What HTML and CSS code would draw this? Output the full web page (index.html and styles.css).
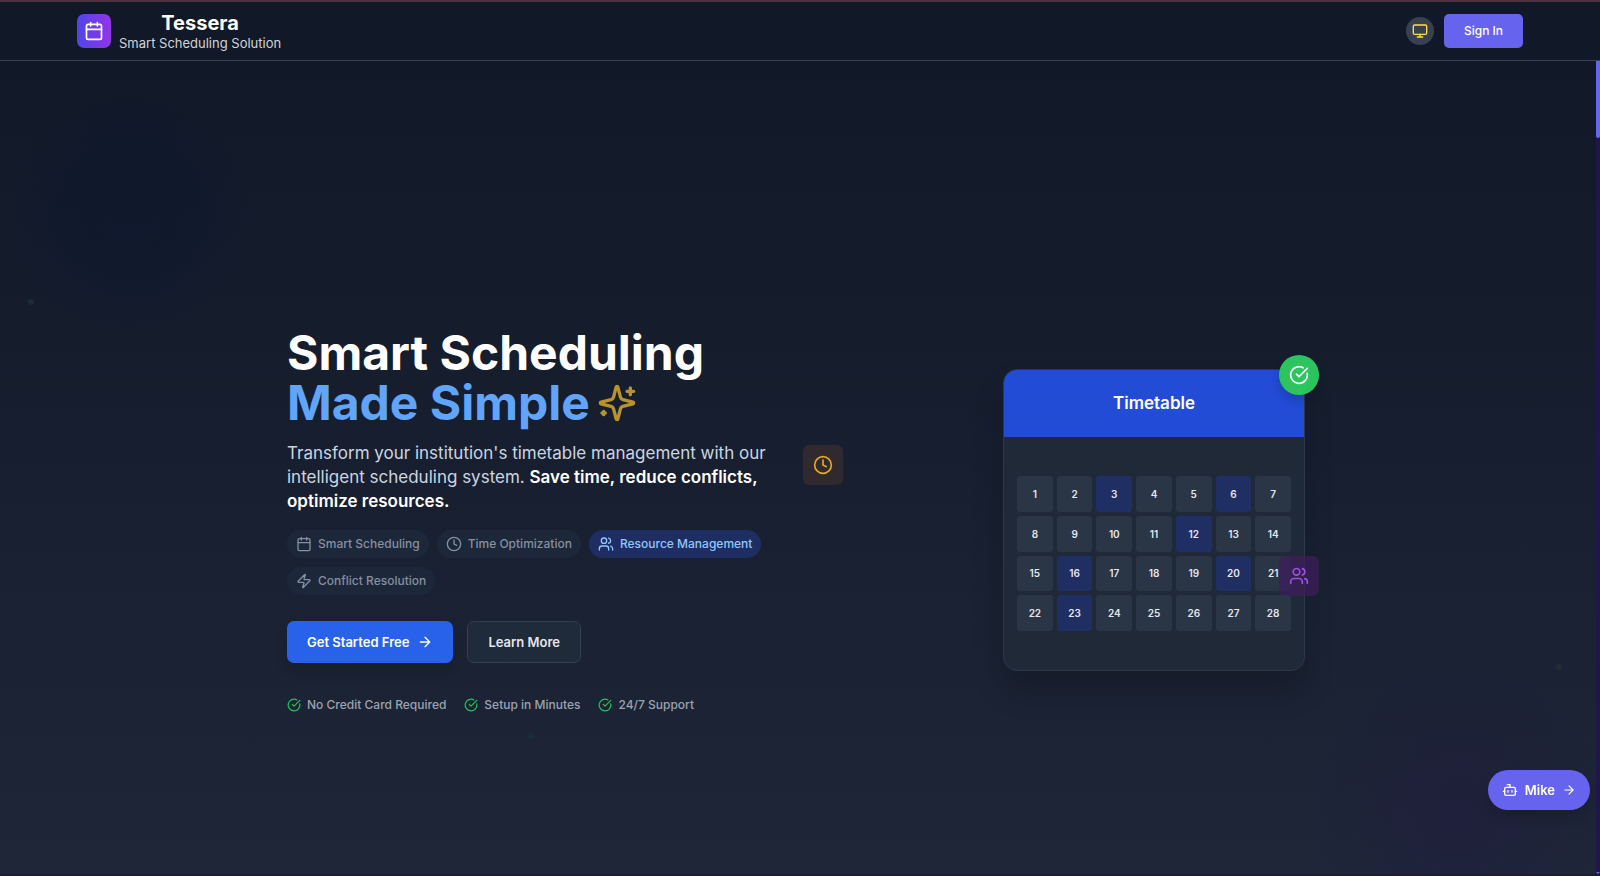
FILE: index.html
```html
<!DOCTYPE html>
<html lang="en">
<head>
<meta charset="utf-8">
<meta name="viewport" content="width=device-width, initial-scale=1">
<title>Tessera</title>
<link rel="stylesheet" href="styles.css">
</head>
<body>
<svg class="sprite" aria-hidden="true">
  <symbol id="calendar" viewBox="0 0 24 24"><path d="M8 2v4M16 2v4M3 10h18"/><rect width="18" height="18" x="3" y="4" rx="2"/></symbol>
  <symbol id="clock" viewBox="0 0 24 24"><circle cx="12" cy="12" r="10"/><path d="M12 6v6l4 2"/></symbol>
  <symbol id="users" viewBox="0 0 24 24"><path d="M16 21v-2a4 4 0 0 0-4-4H6a4 4 0 0 0-4 4v2"/><circle cx="9" cy="7" r="4"/><path d="M22 21v-2a4 4 0 0 0-3-3.87M16 3.13a4 4 0 0 1 0 7.75"/></symbol>
  <symbol id="zap" viewBox="0 0 24 24"><path d="M4 14a1 1 0 0 1-.78-1.63l9.9-10.2a.5.5 0 0 1 .86.46l-1.92 6.02A1 1 0 0 0 13 10h7a1 1 0 0 1 .78 1.63l-9.9 10.2a.5.5 0 0 1-.86-.46l1.92-6.02A1 1 0 0 0 11 14z"/></symbol>
  <symbol id="arrow" viewBox="0 0 24 24"><path d="M5 12h14M12 5l7 7-7 7"/></symbol>
  <symbol id="check" viewBox="0 0 24 24"><path d="M21.801 10A10 10 0 1 1 17 3.335"/><path d="m9 11 3 3L22 4"/></symbol>
  <symbol id="monitor" viewBox="0 0 24 24"><rect width="20" height="14" x="2" y="3" rx="2"/><path d="M8 21h8M12 17v4"/></symbol>
  <symbol id="bot" viewBox="0 0 24 24"><path d="M12 8V4H8"/><rect width="16" height="12" x="4" y="8" rx="2"/><path d="M2 14h2M20 14h2M15 13v2M9 13v2"/></symbol>
  <symbol id="sparkles" viewBox="0 0 24 24"><path d="M9.937 15.5A2 2 0 0 0 8.5 14.063l-6.135-1.582a.5.5 0 0 1 0-.962L8.5 9.936A2 2 0 0 0 9.937 8.5l1.582-6.135a.5.5 0 0 1 .963 0L14.063 8.5A2 2 0 0 0 15.5 9.937l6.135 1.581a.5.5 0 0 1 0 .964L15.5 14.063a2 2 0 0 0-1.437 1.437l-1.582 6.135a.5.5 0 0 1-.963 0z"/><path d="M20 3v4M22 5h-4M4 17v2M5 18H3"/></symbol>
</svg>

<header class="header">
  <a class="brand" href="#">
    <span class="brand-mark"><svg class="icon icon-lg"><use href="#calendar"/></svg></span>
    <span class="brand-text"><strong class="brand-name">Tessera</strong><span class="brand-tag">Smart Scheduling Solution</span></span>
  </a>
  <div class="header-actions">
    <button class="theme-toggle" type="button" aria-label="Theme"><svg class="icon icon-sm"><use href="#monitor"/></svg></button>
    <button class="sign-in" type="button">Sign In</button>
  </div>
</header>

<main class="hero">
  <span class="glow glow-blue"></span>
  <span class="glow glow-purple"></span>
  <span class="dot dot-a"></span><span class="dot dot-b"></span><span class="dot dot-c"></span>
  <div class="hero-inner">
    <section class="copy">
      <h1 class="title">Smart Scheduling<br><span class="accent">Made Simple<svg class="icon sparkle"><use href="#sparkles"/></svg></span></h1>
      <p class="lead">Transform your institution's timetable management with our intelligent scheduling system. <strong>Save time, reduce conflicts, optimize resources.</strong></p>
      <ul class="chips">
        <li class="chip"><svg class="icon icon-sm"><use href="#calendar"/></svg>Smart Scheduling</li>
        <li class="chip"><svg class="icon icon-sm"><use href="#clock"/></svg>Time Optimization</li>
        <li class="chip chip-active"><svg class="icon icon-sm"><use href="#users"/></svg>Resource Management</li>
        <li class="chip"><svg class="icon icon-sm"><use href="#zap"/></svg>Conflict Resolution</li>
      </ul>
      <div class="cta">
        <button class="btn btn-primary" type="button">Get Started Free<svg class="icon icon-sm"><use href="#arrow"/></svg></button>
        <button class="btn btn-secondary" type="button">Learn More</button>
      </div>
      <ul class="trust">
        <li><svg class="icon icon-xs"><use href="#check"/></svg>No Credit Card Required</li>
        <li><svg class="icon icon-xs"><use href="#check"/></svg>Setup in Minutes</li>
        <li><svg class="icon icon-xs"><use href="#check"/></svg>24/7 Support</li>
      </ul>
    </section>
    <section class="visual">
      <span class="badge badge-clock"><svg class="icon icon-lg"><use href="#clock"/></svg></span>
      <div class="card-wrap">
        <div class="card">
          <h2 class="card-head">Timetable</h2>
          <div class="card-body">
            <ol class="days">
              <li>1</li><li>2</li><li class="on">3</li><li>4</li><li>5</li><li class="on">6</li><li>7</li>
              <li>8</li><li>9</li><li>10</li><li>11</li><li class="on">12</li><li>13</li><li>14</li>
              <li>15</li><li class="on">16</li><li>17</li><li>18</li><li>19</li><li class="on">20</li><li>21</li>
              <li>22</li><li class="on">23</li><li>24</li><li>25</li><li>26</li><li>27</li><li>28</li>
            </ol>
          </div>
        </div>
        <span class="badge badge-check"><svg class="icon icon-lg"><use href="#check"/></svg></span>
        <span class="badge badge-users"><svg class="icon icon-lg"><use href="#users"/></svg></span>
      </div>
    </section>
  </div>
  <div class="scroll-track"><div class="scroll-thumb"></div><span class="scroll-arrow"></span></div>
</main>

<button class="assistant" type="button"><svg class="icon icon-sm"><use href="#bot"/></svg>Mike<svg class="icon icon-xs"><use href="#arrow"/></svg></button>
</body>
</html>
```
FILE: styles.css
```css
* { box-sizing: border-box; }

body {
  margin: 0;
  min-height: 100vh;
  display: flex;
  flex-direction: column;
  background: #111827;
  color: #fff;
  font-family: Inter, "Liberation Sans", sans-serif;
}

button { font: inherit; color: inherit; border: 0; cursor: pointer; }
ul, ol { margin: 0; padding: 0; list-style: none; }

.sprite { position: absolute; width: 0; height: 0; }
.icon {
  flex: none;
  fill: none;
  stroke: currentColor;
  stroke-width: 2;
  stroke-linecap: round;
  stroke-linejoin: round;
}
.icon-xs { width: 14px; height: 14px; }
.icon-sm { width: 16px; height: 16px; }
.icon-lg { width: 20px; height: 20px; }

.header {
  display: flex;
  align-items: center;
  justify-content: space-between;
  height: 61px;
  padding: 0 77px;
  border-top: 2px solid #49343f;
  border-bottom: 1px solid #374151;
  background: #111827;
}
.brand { display: flex; align-items: center; gap: 8px; color: inherit; text-decoration: none; }
.brand-mark {
  display: grid;
  place-items: center;
  width: 34px;
  height: 34px;
  border-radius: 7px;
  background: linear-gradient(90deg, #4f46e5, #9333ea);
}
.brand-text { display: flex; flex-direction: column; align-items: center; padding-top: 2px; }
.brand-name { font-size: 20px; line-height: 22px; font-weight: 700; }
.brand-tag { font-size: 13px; line-height: 18px; color: #d1d5db; }
.header-actions { display: flex; align-items: center; gap: 10px; }
.theme-toggle {
  display: grid;
  place-items: center;
  width: 28px;
  height: 28px;
  padding: 0;
  border-radius: 50%;
  background: #374151;
  color: #fde047;
}
.sign-in {
  width: 79px;
  height: 34px;
  padding: 0 0 1px;
  border-radius: 5px;
  background: #6664ee;
  font-size: 12px;
  font-weight: 500;
}

.hero {
  position: relative;
  flex: 1;
  display: flex;
  align-items: center;
  justify-content: center;
  padding: 105px 28px 0 20px;
  overflow: hidden;
  background: linear-gradient(#111827, #1e2638);
  border-bottom: 2px solid #1c1d38;
}
.hero-inner {
  position: relative;
  display: grid;
  grid-template-columns: 482px 1fr;
  gap: 34px;
  align-items: center;
  width: 100%;
  max-width: 1018px;
}

.glow { position: absolute; border-radius: 50%; }
.glow-blue {
  left: 10px;
  top: 30px;
  width: 240px;
  height: 240px;
  background: radial-gradient(closest-side, rgb(12 22 46 / 55%), rgb(12 22 46 / 40%) 60%, rgb(12 22 46 / 0%));
}
.glow-purple {
  right: -10px;
  bottom: -90px;
  width: 300px;
  height: 300px;
  background: radial-gradient(closest-side, rgb(34 26 66 / 45%), rgb(34 26 66 / 0%));
}
.dot { position: absolute; width: 6px; height: 6px; border-radius: 50%; background: #1b2b3a; }
.dot-a { left: 2%; top: 238px; margin-left: -4px; }
.dot-b { left: 33%; bottom: 135px; }
.dot-c { right: 38px; bottom: 204px; background: #232b36; }

.title { margin: 0; font-size: 48px; line-height: 50px; font-weight: 700; }
.accent { display: flex; align-items: center; gap: 7px; color: #60a5fa; }
.sparkle { width: 40px; height: 40px; color: #b8922c; }
.lead { margin: 13px 0 0; font-size: 17px; line-height: 24px; color: #cbd5e1; }
.lead strong { font-weight: 600; color: #fff; }

.chips { display: flex; flex-wrap: wrap; gap: 9px 8px; margin-top: 17px; }
.chip {
  display: flex;
  align-items: center;
  gap: 6px;
  height: 28px;
  padding: 0 9px;
  border-radius: 14px;
  background: #1c2739;
  color: #8590a0;
  font-size: 12px;
  font-weight: 500;
}
.chip-active { background: #1e2e63; color: #93c5fd; }

.cta { display: flex; gap: 14px; margin-top: 26px; }
.btn {
  display: flex;
  align-items: center;
  gap: 8px;
  height: 42px;
  padding: 0 20px;
  border-radius: 7px;
  font-size: 13px;
  font-weight: 600;
}
.btn-primary { background: #2962ea; box-shadow: 0 8px 12px rgb(0 0 0 / 14%); }
.btn-secondary { border: 1px solid #344150; background: #1f2a3a; color: #e5e7eb; }

.trust { display: flex; gap: 18px; margin-top: 34px; color: #9ca3af; font-size: 12px; line-height: 16px; font-weight: 500; }
.trust li { display: flex; align-items: center; gap: 6px; }
.trust .icon { color: #22c55e; }

.visual { position: relative; display: flex; justify-content: flex-end; }
.card-wrap { position: relative; width: 302px; }
.card {
  display: flex;
  flex-direction: column;
  aspect-ratio: 1;
  overflow: hidden;
  border: 1px solid #2b394a;
  border-radius: 14px;
  background: #1f2937;
  box-shadow: 0 20px 30px rgb(0 0 0 / 20%);
}
.card-head {
  margin: 0;
  padding: 21px 0 22px;
  background: #224bd6;
  text-align: center;
  font-size: 17px;
  line-height: 24px;
  font-weight: 600;
}
.card-body { flex: 1; display: grid; align-items: center; padding: 0 13px; }
.days { display: grid; grid-template-columns: repeat(7, 1fr); gap: 4px; }
.days li {
  display: grid;
  place-items: center;
  aspect-ratio: 1;
  border-radius: 3px;
  background: #2a3546;
  color: #e5e7eb;
  font-size: 10px;
  font-weight: 600;
}
.days .on { background: #1f2e63; }

.badge { position: absolute; display: grid; place-items: center; width: 40px; height: 40px; border-radius: 6px; }
.badge-clock { left: 0; top: 76px; background: #30292d; color: #e0ab28; }
.badge-check { right: -14px; top: -14px; border-radius: 50%; background: #2bc45f; box-shadow: 0 6px 10px rgb(0 0 0 / 14%); }
.badge-users { right: -14px; bottom: 75px; background: rgb(62 28 92 / 70%); color: #a04ee6; }

.scroll-track { position: absolute; inset: 0 0 0 auto; width: 4px; background: #1f1650; }
.scroll-thumb { height: 77px; border-radius: 0 0 2px 2px; background: #6366f1; }
.scroll-arrow { position: absolute; bottom: 0; left: 0; border: 2px solid transparent; border-top-color: #6366f1; border-bottom: 0; }

.assistant {
  position: fixed;
  right: 10px;
  bottom: 66px;
  display: flex;
  align-items: center;
  gap: 7px;
  height: 40px;
  padding: 0 14px;
  border-radius: 20px;
  background: #6664ee;
  box-shadow: 0 8px 12px rgb(0 0 0 / 14%);
  font-size: 13px;
  font-weight: 600;
}
```
